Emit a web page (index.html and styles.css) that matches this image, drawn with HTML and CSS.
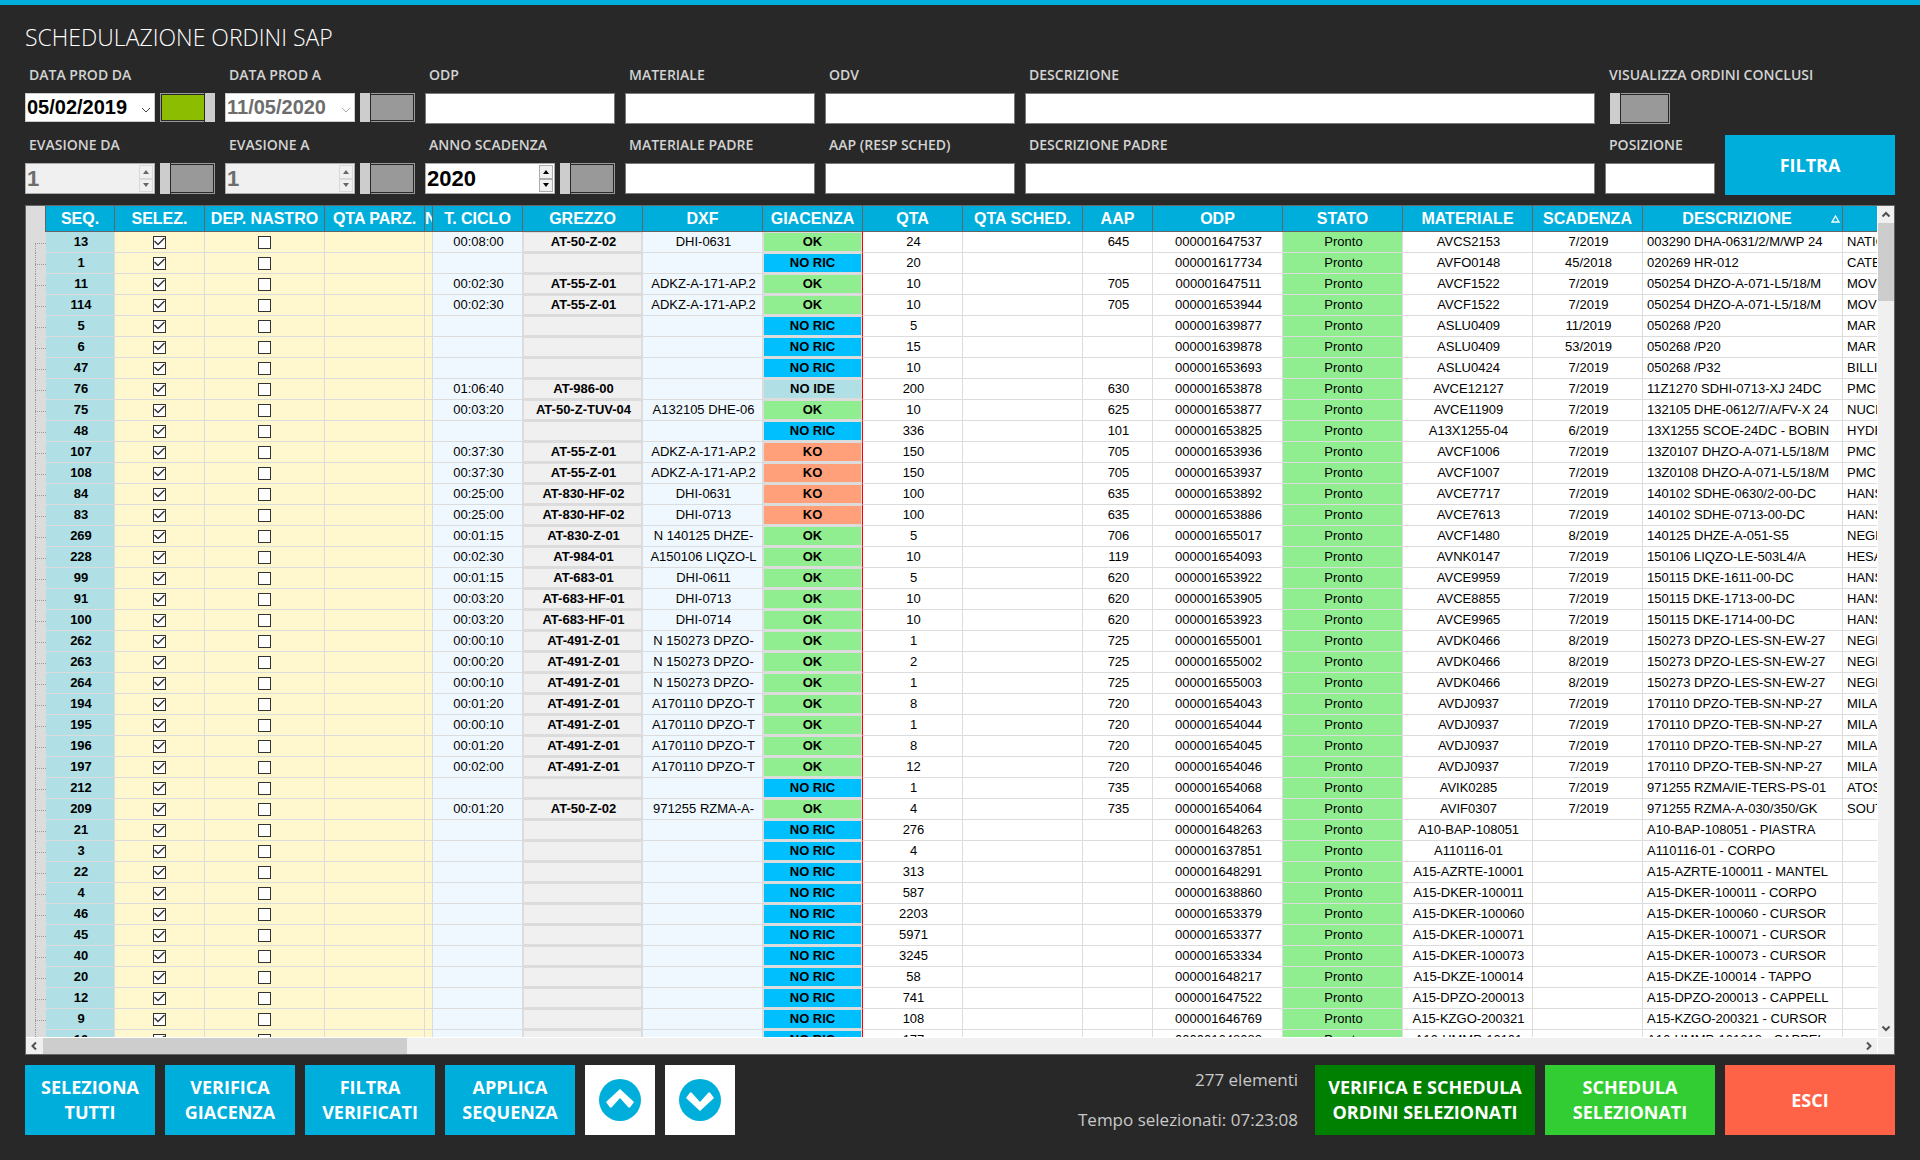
FILE: index.html
```html
<!DOCTYPE html>
<html lang="it">
<head>
    <meta charset="UTF-8">
    <title>Schedulazione Ordini SAP</title>
    <link rel="stylesheet" href="styles.css">
</head>
<body>
    <h1>SCHEDULAZIONE ORDINI SAP</h1>

    <form id="filterForm" class="filters">
        <div class="field">
            <label for="dataDa">DATA PROD DA</label>
            <div class="field-row short">
                <div class="box date">
                    <input type="text" id="dataDa" value="05/02/2019">
                    <button type="button" aria-label="Apri calendario"><svg width="10" height="6" viewBox="0 0 10 6"><path d="M1 1l4 4 4-4" fill="none" stroke="#444"/></svg></button>
                </div>
                <input type="checkbox" class="toggle" aria-label="Attiva data da" checked>
            </div>
        </div>
        <div class="field">
            <label for="dataA">DATA PROD A</label>
            <div class="field-row short">
                <div class="box date">
                    <input type="text" id="dataA" value="11/05/2020" disabled>
                    <button type="button" aria-label="Apri calendario" disabled><svg width="10" height="6" viewBox="0 0 10 6"><path d="M1 1l4 4 4-4" fill="none" stroke="#aaa"/></svg></button>
                </div>
                <input type="checkbox" class="toggle" aria-label="Attiva data a">
            </div>
        </div>
        <div class="field">
            <label for="odp">ODP</label>
            <input type="text" class="text" id="odp">
        </div>
        <div class="field">
            <label for="materiale">MATERIALE</label>
            <input type="text" class="text" id="materiale">
        </div>
        <div class="field">
            <label for="odv">ODV</label>
            <input type="text" class="text" id="odv">
        </div>
        <div class="field">
            <label for="descrizione">DESCRIZIONE</label>
            <input type="text" class="text" id="descrizione">
        </div>
        <div class="field conclusi">
            <label for="conclusi">VISUALIZZA ORDINI CONCLUSI</label>
            <div class="field-row">
                <input type="checkbox" class="toggle" id="conclusi">
            </div>
        </div>

        <div class="field">
            <label for="evasioneDa">EVASIONE DA</label>
            <div class="field-row">
                <div class="box number disabled">
                    <input type="number" id="evasioneDa" value="1" disabled>
                    <div class="spin">
                        <button type="button" aria-label="Aumenta" disabled><svg width="6" height="4"><path d="M0 4l3-4 3 4z"/></svg></button>
                        <button type="button" aria-label="Diminuisci" disabled><svg width="6" height="4"><path d="M0 0l3 4 3-4z"/></svg></button>
                    </div>
                </div>
                <input type="checkbox" class="toggle" aria-label="Attiva evasione da">
            </div>
        </div>
        <div class="field">
            <label for="evasioneA">EVASIONE A</label>
            <div class="field-row">
                <div class="box number disabled">
                    <input type="number" id="evasioneA" value="1" disabled>
                    <div class="spin">
                        <button type="button" aria-label="Aumenta" disabled><svg width="6" height="4"><path d="M0 4l3-4 3 4z"/></svg></button>
                        <button type="button" aria-label="Diminuisci" disabled><svg width="6" height="4"><path d="M0 0l3 4 3-4z"/></svg></button>
                    </div>
                </div>
                <input type="checkbox" class="toggle" aria-label="Attiva evasione a">
            </div>
        </div>
        <div class="field">
            <label for="anno">ANNO SCADENZA</label>
            <div class="field-row">
                <div class="box number">
                    <input type="number" id="anno" value="2020">
                    <div class="spin">
                        <button type="button" aria-label="Aumenta"><svg width="6" height="4"><path d="M0 4l3-4 3 4z"/></svg></button>
                        <button type="button" aria-label="Diminuisci"><svg width="6" height="4"><path d="M0 0l3 4 3-4z"/></svg></button>
                    </div>
                </div>
                <input type="checkbox" class="toggle" aria-label="Attiva anno scadenza">
            </div>
        </div>
        <div class="field">
            <label for="materialePadre">MATERIALE PADRE</label>
            <input type="text" class="text" id="materialePadre">
        </div>
        <div class="field">
            <label for="aap">AAP (RESP SCHED)</label>
            <input type="text" class="text" id="aap">
        </div>
        <div class="field">
            <label for="descrizionePadre">DESCRIZIONE PADRE</label>
            <input type="text" class="text" id="descrizionePadre">
        </div>
        <div class="field">
            <label for="posizione">POSIZIONE</label>
            <input type="text" class="text" id="posizione">
        </div>
        <button type="submit" class="btn btn-filter">FILTRA</button>
    </form>

    <div class="orders">
        <div class="viewport">
            <table>
                <colgroup>
                    <col class="w-tree"><col class="w-seq"><col class="w-90"><col class="w-120"><col class="w-100">
                    <col class="w-note"><col class="w-90"><col class="w-120"><col class="w-120"><col class="w-100">
                    <col class="w-100"><col class="w-120"><col class="w-70"><col class="w-130"><col class="w-120">
                    <col class="w-130"><col class="w-110"><col class="w-200"><col class="w-200">
                </colgroup>
                <thead>
                    <tr>
                        <th class="corner"></th>
                        <th>SEQ.</th>
                        <th>SELEZ.</th>
                        <th>DEP. NASTRO</th>
                        <th>QTA PARZ.</th>
                        <th>N</th>
                        <th>T. CICLO</th>
                        <th>GREZZO</th>
                        <th>DXF</th>
                        <th>GIACENZA</th>
                        <th>QTA</th>
                        <th>QTA SCHED.</th>
                        <th>AAP</th>
                        <th>ODP</th>
                        <th>STATO</th>
                        <th>MATERIALE</th>
                        <th>SCADENZA</th>
                        <th>
                            <div class="sorted">
                                <span>DESCRIZIONE</span>
                                <svg width="9" height="8" viewBox="0 0 9 8"><path d="M4.500 1L8 7H1z" fill="none" stroke="#fff" stroke-width="1.300"/></svg>
                            </div>
                        </th>
                        <th></th>
                    </tr>
                </thead>
                <tbody id="orderList">
                </tbody>
            </table>
        </div>
        <div class="vscroll">
            <svg width="16" height="17" viewBox="0 0 16 17"><path d="M4.500 10.500L8 7l3.500 3.500" fill="none" stroke="#505050" stroke-width="2"/></svg>
            <div class="thumb"></div>
            <svg width="16" height="17" viewBox="0 0 16 17"><path d="M4.500 6.500L8 10l3.500-3.500" fill="none" stroke="#505050" stroke-width="2"/></svg>
        </div>
        <div class="hscroll">
            <svg width="17" height="16" viewBox="0 0 17 16"><path d="M10 4.500L6.500 8l3.500 3.500" fill="none" stroke="#505050" stroke-width="2"/></svg>
            <div class="thumb"></div>
            <svg width="17" height="16" viewBox="0 0 17 16"><path d="M7 4.500l3.500 3.500L7 11.500" fill="none" stroke="#505050" stroke-width="2"/></svg>
        </div>
        <div class="scroll-corner"></div>
    </div>

    <footer>
        <button type="button" class="btn btn-action">SELEZIONA TUTTI</button>
        <button type="button" class="btn btn-action">VERIFICA GIACENZA</button>
        <button type="button" class="btn btn-action">FILTRA VERIFICATI</button>
        <button type="button" class="btn btn-action">APPLICA SEQUENZA</button>
        <button type="button" class="btn btn-move" aria-label="Sposta su">
            <svg width="44" height="44" viewBox="0 0 44 44">
                <circle cx="22" cy="22" r="21" fill="#00aedb"/>
                <path d="M22 11L36 24l-4 5.500h-1.500L22 20l-8.500 9.500H12L8 24z" fill="#fff"/>
            </svg>
        </button>
        <button type="button" class="btn btn-move" aria-label="Sposta giù">
            <svg width="44" height="44" viewBox="0 0 44 44">
                <circle cx="22" cy="22" r="21" fill="#00aedb"/>
                <path d="M22 33L36 20l-4-5.500h-1.500L22 24l-8.500-9.500H12L8 20z" fill="#fff"/>
            </svg>
        </button>
        <div class="summary">
            <span>277 elementi</span>
            <span>Tempo selezionati: 07:23:08</span>
        </div>
        <button type="button" class="btn btn-verify">VERIFICA E SCHEDULA ORDINI SELEZIONATI</button>
        <button type="button" class="btn btn-schedule">SCHEDULA SELEZIONATI</button>
        <button type="button" class="btn btn-exit">ESCI</button>
    </footer>

    <script src="script.js"></script>
</body>
</html>
```
FILE: styles.css
```css
* {
    box-sizing: border-box;
}
body {
    margin: 0;
    height: 100vh;
    padding: 0 25px 25px;
    border-top: 5px solid #00aedb;
    background-color: #282828;
    color: #d3d3d3;
    font-family: "Open Sans", "Noto Sans", sans-serif;
    display: flex;
    flex-direction: column;
}
h1 {
    margin: 0;
    padding-top: 14px;
    height: 58px;
    font-size: 23px;
    font-weight: 300;
    line-height: 36px;
    color: white;
}
button {
    font-family: inherit;
    cursor: pointer;
}

/* Filtri */
.filters {
    display: grid;
    grid-template-columns: repeat(5, 190px) 1fr 110px 170px;
    column-gap: 10px;
    row-gap: 9px;
}
.field {
    display: flex;
    flex-direction: column;
}
.field label {
    height: 30px;
    padding-left: 4px;
    font-size: 14px;
    font-weight: 600;
    line-height: 24px;
    white-space: nowrap;
}
.field-row {
    display: flex;
    gap: 5px;
    height: 31px;
}
.field-row.short {
    height: 29px;
}
.conclusi {
    grid-column: span 2;
}
.conclusi .field-row {
    padding-left: 5px;
}
.conclusi .toggle {
    width: 60px;
}
.text {
    width: 100%;
    height: 31px;
    padding: 0 4px;
    border: 1px solid #7a7a7a;
    background-color: white;
    font-family: "Liberation Sans", Arial, sans-serif;
    font-size: 20px;
}
.box {
    flex: 1;
    min-width: 0;
    display: flex;
    background-color: white;
    border: 1px solid #ababab;
}
.box input {
    flex: 1;
    width: 0;
    padding: 0 1px;
    border: none;
    background: none;
    color: black;
    font-family: "Liberation Sans", Arial, sans-serif;
    font-weight: bold;
    font-size: 20px;
    appearance: textfield;
}
.box input::-webkit-inner-spin-button {
    display: none;
}
.box input:disabled {
    color: #6d6d6d;
}
.box.number input {
    font-size: 22px;
}
.box.date {
    border-color: #ccc;
}
.box.date button {
    width: 17px;
    padding: 0;
    border: none;
    background: none;
}
.box.disabled {
    background-color: #f0f0f0;
}
.spin {
    width: 16px;
    padding: 1px;
    display: flex;
    flex-direction: column;
}
.spin button {
    flex: 1;
    display: flex;
    align-items: center;
    justify-content: center;
    padding: 0;
    border: 1px solid #acacac;
    background-color: #f0f0f0;
}
.spin button:disabled {
    border-color: #d9d9d9;
}
.spin button:disabled svg {
    fill: #666;
}
.toggle {
    appearance: none;
    flex: none;
    width: 55px;
    margin: 0;
    padding: 2px;
    background:
        linear-gradient(90deg, #cdcdcd 10px, #282828 10px) left / 11px 100% no-repeat border-box,
        linear-gradient(#999, #999) content-box,
        linear-gradient(#282828, #282828) center / calc(100% - 2px) calc(100% - 2px) no-repeat border-box,
        #999;
}
.toggle:checked {
    background:
        linear-gradient(270deg, #cdcdcd 10px, #282828 10px) right / 11px 100% no-repeat border-box,
        linear-gradient(#8cbd00, #8cbd00) content-box,
        linear-gradient(#282828, #282828) center / calc(100% - 2px) calc(100% - 2px) no-repeat border-box,
        #999;
}

/* Pulsanti */
.btn {
    height: 70px;
    padding: 0 10px;
    border: none;
    background-color: #00aedb;
    color: white;
    font-size: 18px;
    font-weight: 700;
    line-height: 25px;
}
.btn-filter {
    height: 60px;
    margin-top: 2px;
}
.btn-action {
    width: 130px;
}
.btn-move {
    width: 70px;
    padding: 0;
    display: flex;
    align-items: center;
    justify-content: center;
    background-color: white;
}
.btn-verify {
    width: 220px;
    background-color: green;
}
.btn-schedule {
    width: 170px;
    background-color: limegreen;
}
.btn-exit {
    width: 170px;
    background-color: tomato;
}

/* Griglia ordini */
.orders {
    flex: 1;
    min-height: 0;
    margin: 10px 0;
    display: grid;
    grid-template-columns: minmax(0, 1fr) 16px;
    grid-template-rows: minmax(0, 1fr) 16px;
    gap: 1px;
    border: 1px solid #646464;
    background-color: white;
    font-family: "Liberation Sans", Arial, sans-serif;
    color: black;
}
.viewport {
    overflow: hidden;
}
table {
    width: 2017px;
    table-layout: fixed;
    border-collapse: separate;
    border-spacing: 0;
}
.w-tree { width: 20px; }
.w-seq { width: 69px; }
.w-note { width: 8px; }
.w-70 { width: 70px; }
.w-90 { width: 90px; }
.w-100 { width: 100px; }
.w-110 { width: 110px; }
.w-120 { width: 120px; }
.w-130 { width: 130px; }
.w-200 { width: 200px; }
th {
    height: 26px;
    padding: 0;
    border-right: 1px solid #646464;
    border-bottom: 1px solid #646464;
    background-color: #00aedb;
    color: white;
    font-size: 16px;
    line-height: 25px;
    white-space: nowrap;
    overflow: hidden;
}
th.corner {
    border-bottom: none;
    background-color: #dcdcdc;
}
.sorted {
    display: flex;
    align-items: center;
    padding-right: 2px;
}
.sorted span {
    flex: 1;
}
td {
    height: 21px;
    padding: 0 0 0 2px;
    border-right: 1px solid #dcdcdc;
    border-bottom: 1px solid #dcdcdc;
    font-size: 13px;
    line-height: 20px;
    text-align: center;
    white-space: nowrap;
    overflow: hidden;
}
.tree {
    padding-left: 9px;
    border: none;
    background-color: #dcdcdc;
}
.branch {
    height: 21px;
    border-left: 1px dotted #999;
    background: linear-gradient(90deg, transparent 1px, #999 1px) 0 11px / 2px 1px repeat-x;
}
tr:first-child .branch {
    height: 10px;
    margin-top: 11px;
    background-position: 0 0;
}
.seq {
    background-color: #b0e0e6;
    font-weight: bold;
}
.edit {
    padding: 0;
    background-color: #fff8cf;
}
.edit input {
    appearance: none;
    display: block;
    width: 13px;
    height: 13px;
    margin: 0 auto;
    border: 1px solid #333;
    background-color: white;
}
.edit input:checked::before {
    content: "";
    display: block;
    height: 11px;
    background-color: #333;
    clip-path: polygon(0 5px, 1px 4px, 4px 7px, 10px 1px, 11px 2px, 4px 9px);
}
.info {
    background-color: #f0f8ff;
}
.grezzo {
    background-color: #f0f0f0;
    box-shadow: inset 0 0 0 1px #dcdcdc;
    font-weight: bold;
}
.giacenza {
    padding: 0;
    border-right-color: red;
    box-shadow: inset 0 0 0 1px #dcdcdc;
    font-weight: bold;
}
.ok {
    background-color: #90ee90;
}
.ko {
    background-color: #ffa07a;
}
.noric {
    background-color: #00bfff;
}
.noide {
    background-color: #b0e0e6;
}
.left {
    padding-left: 4px;
    text-align: left;
}

/* Barre di scorrimento */
.vscroll, .hscroll {
    display: flex;
    background-color: #f0f0f0;
}
.vscroll {
    flex-direction: column;
}
.vscroll .thumb {
    height: 78px;
    margin-bottom: auto;
}
.hscroll .thumb {
    width: 364px;
    margin-right: auto;
}
.thumb {
    background-color: #cdcdcd;
}
.scroll-corner {
    background-color: #f0f0f0;
}

footer {
    display: flex;
    gap: 10px;
}
.summary {
    margin-left: auto;
    margin-right: 7px;
    display: flex;
    flex-direction: column;
    justify-content: center;
    height: 70px;
    text-align: right;
    font-size: 17px;
    line-height: 40px;
    white-space: nowrap;
    color: #c8c8c8;
}
```
FILE: script.js
```js
// seq, t. ciclo, grezzo, dxf, giacenza, qta, aap, odp, materiale, scadenza, descrizione, cliente
const orders = [
    ['13', '00:08:00', 'AT-50-Z-02', 'DHI-0631', 'OK', '24', '645', '000001647537', 'AVCS2153', '7/2019', '003290 DHA-0631/2/M/WP 24', 'NATIO'],
    ['1', '', '', '', 'NO RIC', '20', '', '000001617734', 'AVFO0148', '45/2018', '020269 HR-012', 'CATER'],
    ['11', '00:02:30', 'AT-55-Z-01', 'ADKZ-A-171-AP.2', 'OK', '10', '705', '000001647511', 'AVCF1522', '7/2019', '050254 DHZO-A-071-L5/18/M', 'MOVI'],
    ['114', '00:02:30', 'AT-55-Z-01', 'ADKZ-A-171-AP.2', 'OK', '10', '705', '000001653944', 'AVCF1522', '7/2019', '050254 DHZO-A-071-L5/18/M', 'MOVI'],
    ['5', '', '', '', 'NO RIC', '5', '', '000001639877', 'ASLU0409', '11/2019', '050268 /P20', 'MARI'],
    ['6', '', '', '', 'NO RIC', '15', '', '000001639878', 'ASLU0409', '53/2019', '050268 /P20', 'MARI'],
    ['47', '', '', '', 'NO RIC', '10', '', '000001653693', 'ASLU0424', '7/2019', '050268 /P32', 'BILLI'],
    ['76', '01:06:40', 'AT-986-00', '', 'NO IDE', '200', '630', '000001653878', 'AVCE12127', '7/2019', '11Z1270 SDHI-0713-XJ 24DC', 'PMC'],
    ['75', '00:03:20', 'AT-50-Z-TUV-04', 'A132105 DHE-06', 'OK', '10', '625', '000001653877', 'AVCE11909', '7/2019', '132105 DHE-0612/7/A/FV-X 24', 'NUCL'],
    ['48', '', '', '', 'NO RIC', '336', '101', '000001653825', 'A13X1255-04', '6/2019', '13X1255 SCOE-24DC - BOBIN', 'HYDR'],
    ['107', '00:37:30', 'AT-55-Z-01', 'ADKZ-A-171-AP.2', 'KO', '150', '705', '000001653936', 'AVCF1006', '7/2019', '13Z0107 DHZO-A-071-L5/18/M', 'PMC'],
    ['108', '00:37:30', 'AT-55-Z-01', 'ADKZ-A-171-AP.2', 'KO', '150', '705', '000001653937', 'AVCF1007', '7/2019', '13Z0108 DHZO-A-071-L5/18/M', 'PMC'],
    ['84', '00:25:00', 'AT-830-HF-02', 'DHI-0631', 'KO', '100', '635', '000001653892', 'AVCE7717', '7/2019', '140102 SDHE-0630/2-00-DC', 'HANS'],
    ['83', '00:25:00', 'AT-830-HF-02', 'DHI-0713', 'KO', '100', '635', '000001653886', 'AVCE7613', '7/2019', '140102 SDHE-0713-00-DC', 'HANS'],
    ['269', '00:01:15', 'AT-830-Z-01', 'N 140125 DHZE-', 'OK', '5', '706', '000001655017', 'AVCF1480', '8/2019', '140125 DHZE-A-051-S5', 'NEGRI'],
    ['228', '00:02:30', 'AT-984-01', 'A150106 LIQZO-L', 'OK', '10', '119', '000001654093', 'AVNK0147', '7/2019', '150106 LIQZO-LE-503L4/A', 'HESA'],
    ['99', '00:01:15', 'AT-683-01', 'DHI-0611', 'OK', '5', '620', '000001653922', 'AVCE9959', '7/2019', '150115 DKE-1611-00-DC', 'HANS'],
    ['91', '00:03:20', 'AT-683-HF-01', 'DHI-0713', 'OK', '10', '620', '000001653905', 'AVCE8855', '7/2019', '150115 DKE-1713-00-DC', 'HANS'],
    ['100', '00:03:20', 'AT-683-HF-01', 'DHI-0714', 'OK', '10', '620', '000001653923', 'AVCE9965', '7/2019', '150115 DKE-1714-00-DC', 'HANS'],
    ['262', '00:00:10', 'AT-491-Z-01', 'N 150273 DPZO-', 'OK', '1', '725', '000001655001', 'AVDK0466', '8/2019', '150273 DPZO-LES-SN-EW-27', 'NEGRI'],
    ['263', '00:00:20', 'AT-491-Z-01', 'N 150273 DPZO-', 'OK', '2', '725', '000001655002', 'AVDK0466', '8/2019', '150273 DPZO-LES-SN-EW-27', 'NEGRI'],
    ['264', '00:00:10', 'AT-491-Z-01', 'N 150273 DPZO-', 'OK', '1', '725', '000001655003', 'AVDK0466', '8/2019', '150273 DPZO-LES-SN-EW-27', 'NEGRI'],
    ['194', '00:01:20', 'AT-491-Z-01', 'A170110 DPZO-T', 'OK', '8', '720', '000001654043', 'AVDJ0937', '7/2019', '170110 DPZO-TEB-SN-NP-27', 'MILA'],
    ['195', '00:00:10', 'AT-491-Z-01', 'A170110 DPZO-T', 'OK', '1', '720', '000001654044', 'AVDJ0937', '7/2019', '170110 DPZO-TEB-SN-NP-27', 'MILA'],
    ['196', '00:01:20', 'AT-491-Z-01', 'A170110 DPZO-T', 'OK', '8', '720', '000001654045', 'AVDJ0937', '7/2019', '170110 DPZO-TEB-SN-NP-27', 'MILA'],
    ['197', '00:02:00', 'AT-491-Z-01', 'A170110 DPZO-T', 'OK', '12', '720', '000001654046', 'AVDJ0937', '7/2019', '170110 DPZO-TEB-SN-NP-27', 'MILA'],
    ['212', '', '', '', 'NO RIC', '1', '735', '000001654068', 'AVIK0285', '7/2019', '971255 RZMA/IE-TERS-PS-01', 'ATOS'],
    ['209', '00:01:20', 'AT-50-Z-02', '971255 RZMA-A-', 'OK', '4', '735', '000001654064', 'AVIF0307', '7/2019', '971255 RZMA-A-030/350/GK', 'SOUT'],
    ['21', '', '', '', 'NO RIC', '276', '', '000001648263', 'A10-BAP-108051', '', 'A10-BAP-108051 - PIASTRA', ''],
    ['3', '', '', '', 'NO RIC', '4', '', '000001637851', 'A110116-01', '', 'A110116-01 - CORPO', ''],
    ['22', '', '', '', 'NO RIC', '313', '', '000001648291', 'A15-AZRTE-10001', '', 'A15-AZRTE-100011 - MANTEL', ''],
    ['4', '', '', '', 'NO RIC', '587', '', '000001638860', 'A15-DKER-100011', '', 'A15-DKER-100011 - CORPO', ''],
    ['46', '', '', '', 'NO RIC', '2203', '', '000001653379', 'A15-DKER-100060', '', 'A15-DKER-100060 - CURSOR', ''],
    ['45', '', '', '', 'NO RIC', '5971', '', '000001653377', 'A15-DKER-100071', '', 'A15-DKER-100071 - CURSOR', ''],
    ['40', '', '', '', 'NO RIC', '3245', '', '000001653334', 'A15-DKER-100073', '', 'A15-DKER-100073 - CURSOR', ''],
    ['20', '', '', '', 'NO RIC', '58', '', '000001648217', 'A15-DKZE-100014', '', 'A15-DKZE-100014 - TAPPO', ''],
    ['12', '', '', '', 'NO RIC', '741', '', '000001647522', 'A15-DPZO-200013', '', 'A15-DPZO-200013 - CAPPELL', ''],
    ['9', '', '', '', 'NO RIC', '108', '', '000001646769', 'A15-KZGO-200321', '', 'A15-KZGO-200321 - CURSOR', ''],
    ['10', '', '', '', 'NO RIC', '177', '', '000001648083', 'A16-HMMP-10101', '', 'A16-HMMP-101013 - CAPPEL', '']
];

const giacenzaClass = { 'OK': 'ok', 'KO': 'ko', 'NO RIC': 'noric', 'NO IDE': 'noide' };

// Carica gli ordini nella griglia
document.getElementById('orderList').innerHTML = orders.map(o => `
    <tr>
        <td class="tree"><div class="branch"></div></td>
        <td class="seq">${o[0]}</td>
        <td class="edit"><input type="checkbox" aria-label="Seleziona ${o[0]}" checked></td>
        <td class="edit"><input type="checkbox" aria-label="Deposito nastro ${o[0]}"></td>
        <td class="edit"></td>
        <td class="edit"></td>
        <td class="info">${o[1]}</td>
        <td class="grezzo">${o[2]}</td>
        <td class="info">${o[3]}</td>
        <td class="giacenza ${giacenzaClass[o[4]]}">${o[4]}</td>
        <td>${o[5]}</td>
        <td></td>
        <td>${o[6]}</td>
        <td>${o[7]}</td>
        <td class="ok">Pronto</td>
        <td>${o[8]}</td>
        <td>${o[9]}</td>
        <td class="left">${o[10]}</td>
        <td class="left">${o[11]}</td>
    </tr>
`).join('');

document.getElementById('filterForm').addEventListener('submit', function(e) {
    e.preventDefault();
});
```
